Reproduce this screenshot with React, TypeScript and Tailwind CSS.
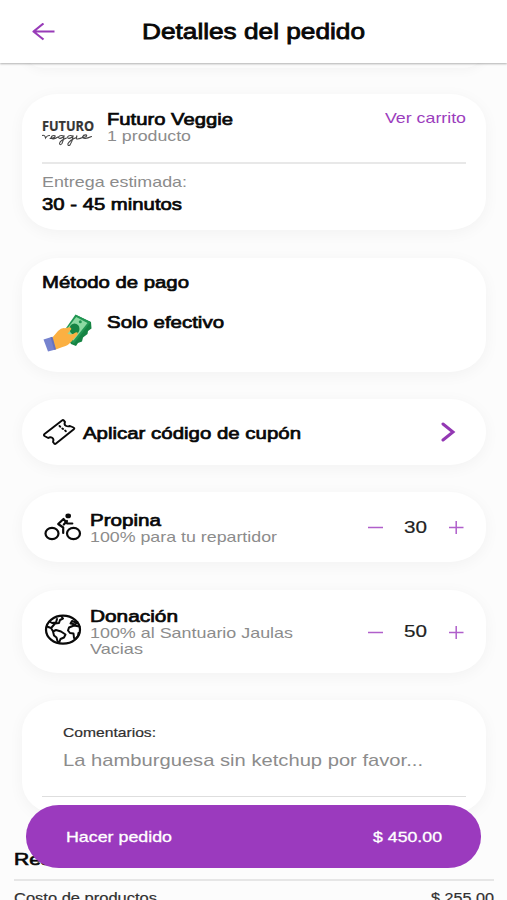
import { useLayoutEffect, useRef, useState } from "react";
import type { ReactNode } from "react";

type TextProps = { width: number; className?: string; children: string };

// One line of wide-set text, stretched horizontally to the given width.
function Wide({ width, className = "", children }: TextProps) {
  const ref = useRef<HTMLSpanElement>(null);
  const [scale, setScale] = useState(1.15);
  useLayoutEffect(() => {
    if (ref.current) setScale(width / ref.current.getBoundingClientRect().width * scale);
  }, [width, children]);
  return (
    <span className={`block h-4 shrink-0 whitespace-nowrap leading-4 ${className}`} style={{ width }}>
      <span ref={ref} className="inline-block origin-left align-top" style={{ transform: `scaleX(${scale})` }}>
        {children}
      </span>
    </span>
  );
}

const strong = "text-[17px] text-[#080808] [-webkit-text-stroke:0.7px_#080808]";
const muted = "text-[15px] text-[#8c8c8c]";

function Card({ className, children }: { className: string; children: ReactNode }) {
  return (
    <section className={`shrink-0 rounded-[36px/32px] bg-white px-5 shadow-[0_3px_16px_rgba(0,0,0,0.045)] ${className}`}>
      {children}
    </section>
  );
}

function Stepper({ value }: { value: string }) {
  return (
    <div className="mr-0.5 flex items-center">
      <svg className="h-[14px] w-[15px]" viewBox="0 0 15 14"><path d="M0 7.5h15" stroke="#b05fcb" strokeWidth="1.5" /></svg>
      <Wide width={23} className="ml-[21px] mt-px text-[17px] text-[#222] [-webkit-text-stroke:0.2px_#222]">{value}</Wide>
      <svg className="ml-[22px] h-[14px] w-[15px]" viewBox="0 0 15 14"><path d="M0 7.5h14.500M7.200 1v13" stroke="#b05fcb" strokeWidth="1.5" /></svg>
    </div>
  );
}

function FuturoLogo() {
  return (
    <svg className="mt-2 h-[29px] w-[53px]" viewBox="0 0 53 29">
      <text x="0" y="12.2" fontFamily="Open Sans, sans-serif" fontWeight="700" fontSize="14.5" textLength="52" lengthAdjust="spacingAndGlyphs" fill="#353535" stroke="#353535" strokeWidth="0.2">FUTURO</text>
      <path d="M0 16.500q3-1 3.500 2.500 2-3 4-2.500M8 19.500q6-.8 5-2.800-3-.7-4 1.800 1 3 7-.5M22 17q-4-1.500-5.500 1 .5 3 5.500-.5-.5 4-2 7-2 2.500-2.500 0 .5-3 7-5.500M31 17q-4-1.500-5.500 1 .5 3 5.500-.5-.5 5-3 8.500-2.500 1.500-2-1.500 2-3.500 8.500-6l.5-2q-1.500 4 .5 3.500 3-.5 5-1.500 5-.5 4-2.500-3-.5-4 2 1 3 9-.5" fill="none" stroke="#444" strokeWidth="1.1" strokeLinecap="round" />
    </svg>
  );
}

function CashHand() {
  return (
    <svg className="h-[38px] w-[50px]" viewBox="0 0 50 38">
      <path d="M34 1 49 8l.5 6.500-3.500 2.500-.5 3-4.500 3.500-1 4-4 1.500-2 3-5-2-6-10Z" fill="#168443" />
      <path d="M33.500.5 48.700 8 32 29.500 18.500 22Z" fill="#219653" />
      <path d="M34.200 3 45.500 9 31.500 26.500 21 20Z" fill="#8cdaa2" />
      <ellipse cx="32.500" cy="15" rx="5" ry="5.500" fill="#168443" />
      <circle cx="38.300" cy="7.800" r="1.500" fill="#219653" />
      <path d="M10 24 16 17q3.500-3.500 7-2.800l4.500-1q3 1 1 3l-3 3.500q4 2 8-1.200 3-1 2 2l-6 7q-4 4.500-9 5.500l-8 3Z" fill="#fbb042" />
      <path d="m1.500 25.500 8-2.500 4.200 12.500-7.700 2Z" fill="#7683ce" />
      <path d="m8.500 23.300 2-.5 3.500 12.400-1.800.5Z" fill="#6572bd" />
    </svg>
  );
}

function Ticket() {
  return (
    <svg className="h-[28px] w-[34px]" viewBox="0 0 34 28" fill="none" stroke="#0a0a0a" strokeWidth="1.9" strokeLinejoin="round" strokeLinecap="round">
      <path d="M2.500 16 20 2.500q1-.8 1.800 0l1.200 1.300q-1.200 2.700.8 3.900t4.200.3l3.500 1.500q1.500.7.300 1.700L14 25.500q-1 .8-1.800 0l-1.200-1.500q1.200-3-.8-4.200t-4 .2l-3.700-2q-1.200-.8 0-2Z" />
      <path d="m17.500 8 .8.700m2 1.700.8.600m2 1.600.8.600" />
    </svg>
  );
}

function Cyclist() {
  return (
    <svg className="ml-0.5 h-[28px] w-[38px]" viewBox="0 0 38 28" fill="none" stroke="#0a0a0a" strokeWidth="2.2" strokeLinejoin="round" strokeLinecap="round">
      <ellipse cx="8" cy="20.500" rx="6.500" ry="5.600" />
      <ellipse cx="29.500" cy="20.500" rx="6.500" ry="5.600" />
      <path d="M28.300 10.500h-5L19.500 6l-5.300 5 5 3.500v5.500" />
      <path d="m23 8-3.200 3.500" />
      <ellipse cx="24.200" cy="2.900" rx="2.800" ry="2.400" fill="#0a0a0a" stroke="none" />
    </svg>
  );
}

function Globe() {
  return (
    <svg className="-mt-1 ml-0.5 h-[32px] w-[38px]" viewBox="0 0 38 32" fill="none" stroke="#0a0a0a" strokeWidth="2" strokeLinejoin="round" strokeLinecap="round">
      <ellipse cx="19" cy="15.700" rx="17" ry="14" strokeWidth="2.200" />
      <path d="M5.500 7.500 8 9l4-.5 1-3.500M3 12.500l4 1.500 1.500 2.500M8 13l3-3.500 4-.5 1-3 3-1.500-1.500-2" />
      <path d="M9 17.500 12 16l5 1.500 4.500 3-1.500 3-3.500 1.500-1.500 4M9 17.500l1 4 2.500 2 1.500 5.500" />
      <path d="M35.500 12.500 30 11.500l-5 2-1 3 2 2.500 3.500.5.500 4.500 1.500 1 2.500-3 .5-3M26.500 9.500 28 7l4 1.500 1.500-.5M27 9.500l4 1 2.500-2" />
    </svg>
  );
}

export default function App() {
  return (
    <div className="relative flex h-[900px] w-[507px] flex-col overflow-hidden bg-[#fcfcfc] font-['Liberation_Sans',Arial,sans-serif]">
      <header className="z-10 grid h-[63px] shrink-0 grid-cols-[142px_1fr] items-center bg-white shadow-[0_1px_2px_rgba(0,0,0,0.3)]">
        <svg className="ml-8 h-[18px] w-[23px]" viewBox="0 0 23 18" fill="none" stroke="#983bb8" strokeWidth="2.2" strokeLinejoin="round">
          <path d="M22.500 8.500H1.500M11.500.5 1.500 8.500l10 8" />
        </svg>
        <Wide width={223} className="text-[22px] text-[#080808] [-webkit-text-stroke:0.8px_#080808]">Detalles del pedido</Wide>
      </header>
      <main className="flex grow flex-col px-[22px] pr-[21px]">
        <div className="-mt-9 mb-[26px] h-[41px] shrink-0 rounded-[36px/32px] bg-[#fbfbfb] shadow-[0_2px_12px_rgba(0,0,0,0.04)]" />
        <Card className="h-[136px] pt-[17px]">
          <div className="flex h-[51px] items-start">
            <FuturoLogo />
            <div className="ml-3 mt-px grow">
              <Wide width={126} className={strong}>Futuro Veggie</Wide>
              <Wide width={84} className={muted}>1 producto</Wide>
            </div>
            <Wide width={81} className="-mt-px text-[15px] text-[#9b3dbd]">Ver carrito</Wide>
          </div>
          <div className="h-0.5 bg-[#e8e8e8]" />
          <div className="pt-2.5">
            <Wide width={145} className={muted}>Entrega estimada:</Wide>
            <Wide width={140} className={`mt-[7px] ${strong}`}>30 - 45 minutos</Wide>
          </div>
        </Card>
        <Card className="mt-7 h-[114px] pt-[17px]">
          <Wide width={147} className={strong}>Método de pago</Wide>
          <div className="mt-[23px] flex">
            <CashHand />
            <Wide width={117} className={`ml-[15px] mt-px ${strong}`}>Solo efectivo</Wide>
          </div>
        </Card>
        <Card className="mt-[27px] flex h-[66px] items-center">
          <Ticket />
          <Wide width={218} className={`ml-[7px] mt-[3px] grow ${strong}`}>Aplicar código de cupón</Wide>
          <svg className="mr-2.5 h-5 w-[15px]" viewBox="0 0 15 20"><path d="m2 2 10 8-10 8" fill="none" stroke="#9338b3" strokeWidth="3" strokeLinecap="round" /></svg>
        </Card>
        <Card className="mt-[27px] flex h-[70px] items-center">
          <Cyclist />
          <div className="ml-2 mt-1 grow">
            <Wide width={71} className={strong}>Propina</Wide>
            <Wide width={187} className={muted}>100% para tu repartidor</Wide>
          </div>
          <Stepper value="30" />
        </Card>
        <Card className="mt-7 flex h-[83px] items-center">
          <Globe />
          <div className="ml-2 mt-0.5 grow">
            <Wide width={88} className={strong}>Donación</Wide>
            <Wide width={203} className={muted}>100% al Santuario Jaulas</Wide>
            <Wide width={53} className={muted}>Vacias</Wide>
          </div>
          <Stepper value="50" />
        </Card>
        <Card className="mt-[27px] h-[114px] pt-[25px]">
          <Wide width={93} className="ml-[21px] text-[13px] text-[#303030] [-webkit-text-stroke:0.2px_#303030]">Comentarios:</Wide>
          <Wide width={360} className="ml-[21px] mt-3 text-[17px] text-[#8c8c8c]">La hamburguesa sin ketchup por favor...</Wide>
          <div className="mt-[27px] h-px bg-[#dedede]" />
        </Card>
        <div className="-mx-2 mt-[38px] shrink-0">
          <Wide width={90} className={strong}>Resumen</Wide>
          <div className="mt-[11px] h-0.5 bg-[#e6e6e6]" />
          <div className="mt-[9px] flex justify-between">
            <Wide width={143} className="text-[14px] text-[#303030] [-webkit-text-stroke:0.2px_#303030]">Costo de productos</Wide>
            <Wide width={63} className="text-[14.5px] text-[#303030] [-webkit-text-stroke:0.2px_#303030]">$ 255.00</Wide>
          </div>
        </div>
      </main>
      <button className="absolute left-[26px] top-[805px] z-20 flex h-[63px] w-[455px] items-center justify-between rounded-[33px/31px] bg-[#9b3abe] pl-10 pr-[39px] text-left text-white">
        <Wide width={106} className="text-[15px] [-webkit-text-stroke:0.3px_white]">Hacer pedido</Wide>
        <Wide width={69} className="text-[15px] [-webkit-text-stroke:0.3px_white]">$ 450.00</Wide>
      </button>
    </div>
  );
}
